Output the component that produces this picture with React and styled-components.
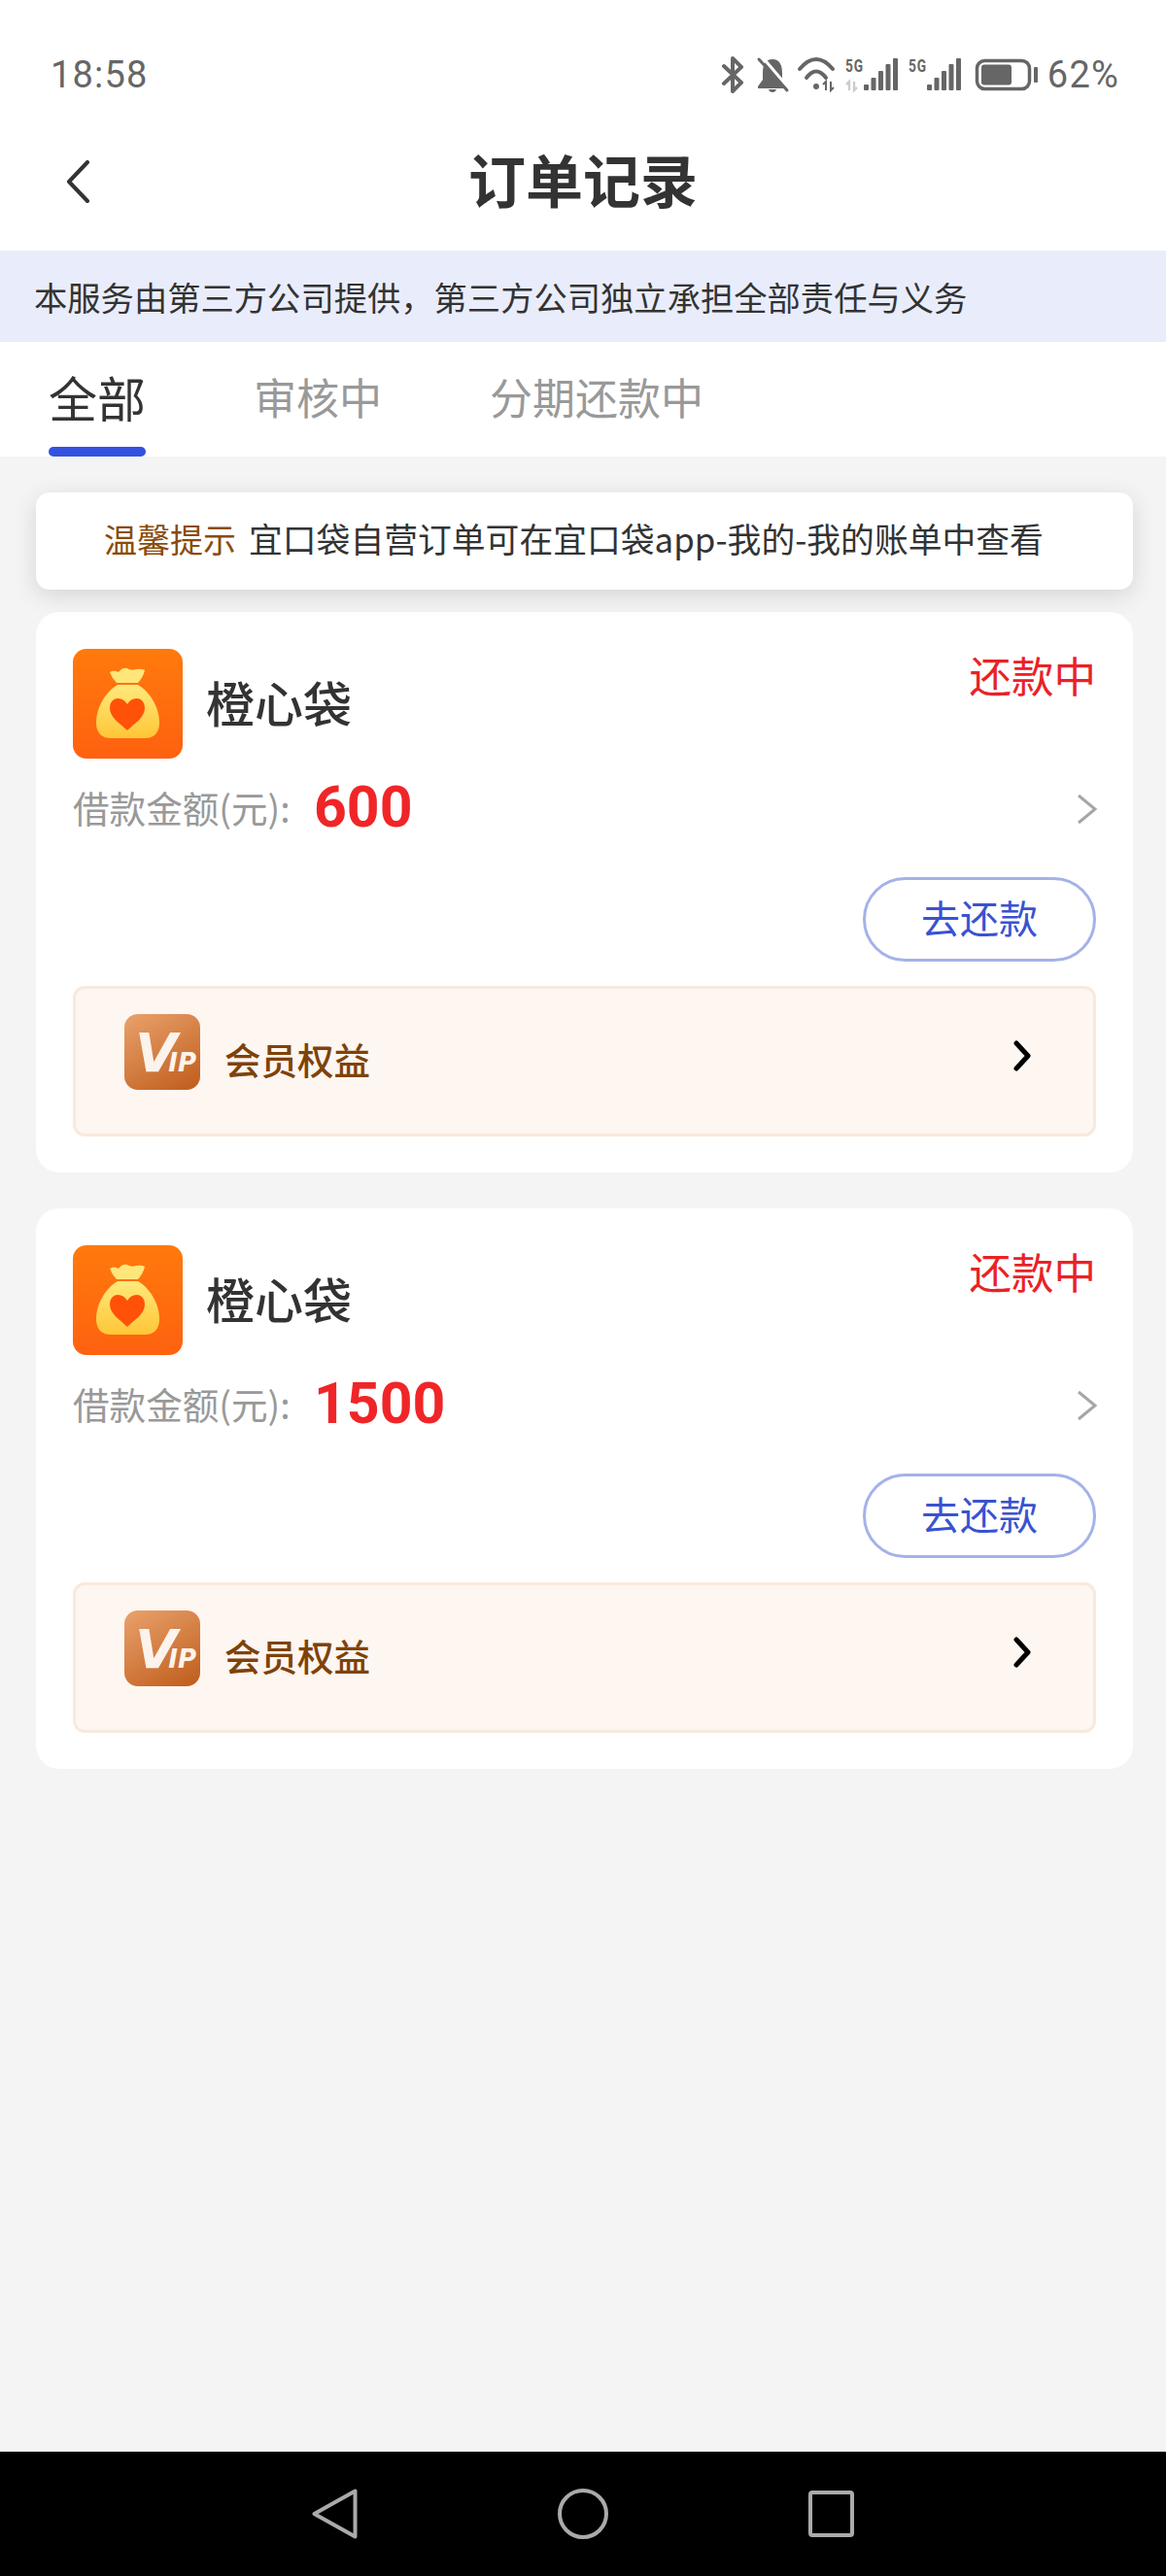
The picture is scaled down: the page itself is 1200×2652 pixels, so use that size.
import React from 'react';
import styled, { createGlobalStyle } from 'styled-components';

const GlobalStyle = createGlobalStyle`
  html, body {
    margin: 0;
    padding: 0;
    background: #f4f4f4;
  }
  * {
    box-sizing: border-box;
  }
  body {
    font-family: "Noto Sans CJK SC", "Noto Sans", sans-serif;
  }
`;

const Page = styled.div`
  display: flex;
  flex-direction: column;
  width: 1200px;
  height: 2652px;
  overflow: hidden;
`;

const StatusBar = styled.div`
  display: flex;
  align-items: center;
  justify-content: space-between;
  height: 124px;
  padding: 30px 48px 0 52px;
  background: #fff;
  color: #666;
  font-family: Roboto, sans-serif;
  font-size: 38px;
  letter-spacing: 1.2px;
`;

const StatusIcons = styled.div`
  display: flex;
  align-items: center;
  gap: 10px;

  svg {
    overflow: visible;
    flex-shrink: 0;
  }
`;

const NavBar = styled.div`
  display: grid;
  grid-template-columns: 1fr auto 1fr;
  align-items: center;
  height: 134px;
  padding: 0 68px 8px;
  background: #fff;
`;

const Title = styled.h1`
  margin: 0 0 6px;
  font-size: 59px;
  font-weight: 700;
  line-height: 70px;
  color: #333;
`;

const Banner = styled.div`
  display: flex;
  align-items: center;
  height: 94px;
  padding-left: 35px;
  background: #e9edfb;
  color: #333;
  font-size: 34.3px;
`;

const Tabs = styled.div`
  display: flex;
  align-items: flex-end;
  gap: 111px;
  height: 118px;
  padding-left: 50px;
  background: #fff;
`;

const Tab = styled.div`
  display: flex;
  flex-direction: column;
  align-items: center;
  font-size: ${(p) => (p.$active ? '50px' : '44px')};
  line-height: 60px;
  color: ${(p) => (p.$active ? '#333' : '#999')};

  &::after {
    content: '';
    width: 100px;
    height: 10px;
    margin-top: 22px;
    border-radius: 5px;
    background: ${(p) => (p.$active ? '#3352e0' : 'transparent')};
  }
`;

const Main = styled.main`
  flex: 1;
  display: flex;
  flex-direction: column;
  padding: 37px 34px 0 37px;
  background: #f4f4f4;
`;

const Notice = styled.div`
  display: flex;
  align-items: center;
  gap: 13px;
  height: 100px;
  padding: 0 0 6px 70px;
  border-radius: 14px;
  background: #fff;
  box-shadow: 0 6px 24px rgba(0, 0, 0, 0.13);
  color: #333;
  font-size: 34.8px;
  position: relative;
`;

const NoticeTag = styled.span`
  font-size: 34px;
  color: #8a4b0c;
`;

const Card = styled.section`
  height: 577px;
  margin-top: ${(p) => (p.$first ? '23px' : '37px')};
  padding: 38px;
  border-radius: 24px;
  background: #fff;
`;

const CardHead = styled.div`
  display: flex;
  justify-content: space-between;
  align-items: flex-start;
  height: 113px;
`;

const Brand = styled.div`
  display: flex;
  align-items: center;
  gap: 24px;
`;

const BrandIcon = styled.div`
  width: 113px;
  height: 113px;
  border-radius: 14px;
  background: linear-gradient(180deg, #ff7a0c, #ff6110);

  svg {
    display: block;
  }
`;

const BrandName = styled.span`
  margin-bottom: 6px;
  font-size: 50px;
  font-weight: 500;
  color: #333;
`;

const Status = styled.span`
  font-size: 43.5px;
  line-height: 54px;
  color: #e92226;
`;

const AmountRow = styled.div`
  display: flex;
  align-items: center;
  justify-content: space-between;
  height: 60px;
  margin-top: 19px;
`;

const Amount = styled.div`
  display: flex;
  align-items: center;
`;

const AmountLabel = styled.span`
  width: 248px;
  font-size: 37.6px;
  color: #999;
`;

const AmountValue = styled.span`
  font-family: Roboto, sans-serif;
  font-size: 59px;
  font-weight: 700;
  color: #f02528;
`;

const ChevronWrap = styled.div`
  margin: 6px -2px 0 0;

  svg {
    display: block;
  }
`;

const ActionRow = styled.div`
  display: flex;
  justify-content: flex-end;
  margin-top: 43px;
`;

const PayButton = styled.button`
  width: 240px;
  height: 87px;
  padding: 0 0 5px;
  border: 3px solid #a4b2e8;
  border-radius: 44px;
  background: #fff;
  color: #3a52d0;
  font-family: inherit;
  font-size: 40px;
`;

const VipBox = styled.div`
  display: flex;
  align-items: center;
  height: 155px;
  margin-top: 25px;
  padding: 0 64px 0 50px;
  border: 3px solid #f9e9dd;
  border-radius: 12px;
  background: #fdf6f1;
`;

const VipIcon = styled.div`
  width: 78px;
  height: 78px;
  margin-bottom: 20px;
  border-radius: 14px;
  background: linear-gradient(150deg, #e9a26c, #bf5c1b);

  svg {
    display: block;
  }
`;

const VipText = styled.span`
  flex: 1;
  margin: 0 0 7px 25px;
  font-size: 37.5px;
  font-weight: 500;
  color: #7f4208;
`;

const VipArrow = styled.svg`
  margin-bottom: 12px;
`;

const BottomBar = styled.div`
  display: flex;
  align-items: center;
  justify-content: center;
  gap: 206px;
  height: 128px;
  background: #000;

  svg {
    display: block;
  }
`;

const Bluetooth = () => (
  <svg width="27" height="40" viewBox="0 0 27 40" fill="none" stroke="#666" strokeWidth="4" strokeLinejoin="round" strokeLinecap="round">
    <path d="M3 11 L21 28 L12 37 V3 L21 12 L3 29" />
  </svg>
);

const BellOff = () => (
  <svg width="32" height="40" viewBox="0 0 32 40">
    <path fill="#666" d="M16 4 C8 4 6 11 6 18 V25 L1 32 V34 H31 V32 L26 25 V18 C26 11 24 4 16 4 Z" />
    <path fill="#666" d="M12 35 H20 Q19 38 16 38 Q13 38 12 35 Z" />
    <path stroke="#fff" strokeWidth="3" d="M5 1 L33 34" />
    <path stroke="#666" strokeWidth="3" strokeLinecap="round" d="M2 4 L31 36" />
  </svg>
);

const Wifi = () => (
  <svg width="38" height="40" viewBox="0 0 38 40" fill="none" stroke="#666" strokeWidth="4" strokeLinecap="round">
    <path d="M2 14 Q19 -6 36 14" />
    <path d="M9 23 Q19 10 29 23" />
    <circle cx="19" cy="32" r="3" fill="#666" stroke="none" />
    <path strokeWidth="2" strokeLinecap="butt" d="M29 36 V27 L26 30 M34 27 V36 L37 33" />
  </svg>
);

const Signal = ({ data }) => (
  <svg width="55" height="40" viewBox="0 0 55 40" fontFamily="Roboto, sans-serif">
    <text x="1" y="17" fontSize="18" fontWeight="700" fill="#666" textLength="19" lengthAdjust="spacingAndGlyphs">5G</text>
    {data && <path fill="none" stroke="#ccc" strokeWidth="2.4" d="M5 36 V27 L2 30 M10 27 V36 L13 33" />}
    {[[20, 30], [27.5, 23], [35, 16], [42.5, 9], [50, 3]].map(([x, y]) => (
      <rect key={x} x={x} y={y} width="5" height={36 - y} rx="1" fill="#666" />
    ))}
  </svg>
);

const Battery = () => (
  <svg width="69" height="40" viewBox="0 0 69 40">
    <rect x="6.5" y="5.5" width="54" height="29" rx="8" fill="none" stroke="#666" strokeWidth="3.5" />
    <rect x="11" y="9.5" width="31" height="21" rx="3" fill="#666" />
    <rect x="65" y="12" width="4" height="16" rx="1" fill="#666" />
  </svg>
);

const BackIcon = () => (
  <svg width="24" height="44" viewBox="0 0 24 44" fill="none" stroke="#333" strokeWidth="4" strokeLinecap="round" strokeLinejoin="round">
    <path d="M22 2 L3 22 L22 42" />
  </svg>
);

const BagIcon = () => (
  <svg width="113" height="113" viewBox="0 0 113 113">
    <defs>
      <linearGradient id="bagFill" x1="0" y1="0" x2="0" y2="1">
        <stop offset="0" stopColor="#ffe97c" />
        <stop offset="1" stopColor="#ffc636" />
      </linearGradient>
    </defs>
    <path fill="#ffe67a" d="M38 24 Q42 21 47 24 Q51 19 56 20 Q60 23 65 21 Q71 20 74 22 Q72 30 67 35 L45 35 Q40 30 38 24 Z" />
    <path fill="url(#bagFill)" d="M46 37 L67 37 C79 44 89 60 89 76 C89 88 82 92 74 92 L39 92 C31 92 24 88 24 76 C24 60 34 44 46 37 Z" />
    <path fill="#ff5208" d="M56 57 C51 48 38 49 38 61 C38 71 49 77 56 84 C63 77 74 71 74 61 C74 49 61 48 56 57 Z" />
  </svg>
);

const VipLogo = () => (
  <svg width="78" height="78" viewBox="0 0 78 78" fontFamily="DejaVu Sans, sans-serif" fontWeight="700" fontStyle="italic" fill="#fbf3ec">
    <text x="11" y="59">
      <tspan fontSize="56">V</tspan>
      <tspan fontSize="26" dx="-9">IP</tspan>
    </text>
  </svg>
);

const GrayChevron = () => (
  <svg width="22" height="32" viewBox="0 0 22 32" fill="none" stroke="#a6a6a6" strokeWidth="3">
    <path d="M2 2 L19 16 L2 30" />
  </svg>
);

const orders = [{ id: 1, amount: '600' }, { id: 2, amount: '1500' }];

const OrderCard = ({ amount, first }) => (
  <Card $first={first}>
    <CardHead>
      <Brand>
        <BrandIcon><BagIcon /></BrandIcon>
        <BrandName>橙心袋</BrandName>
      </Brand>
      <Status>还款中</Status>
    </CardHead>
    <AmountRow>
      <Amount>
        <AmountLabel>借款金额(元):</AmountLabel>
        <AmountValue>{amount}</AmountValue>
      </Amount>
      <ChevronWrap><GrayChevron /></ChevronWrap>
    </AmountRow>
    <ActionRow>
      <PayButton>去还款</PayButton>
    </ActionRow>
    <VipBox>
      <VipIcon><VipLogo /></VipIcon>
      <VipText>会员权益</VipText>
      <VipArrow width="18" height="32" viewBox="0 0 18 32" fill="none" stroke="#000" strokeWidth="5" strokeLinecap="round" strokeLinejoin="round">
        <path d="M3 3 L15 16 L3 29" />
      </VipArrow>
    </VipBox>
  </Card>
);

const App = () => {
  return (
    <Page>
      <GlobalStyle />
      <StatusBar>
        <span>18:58</span>
        <StatusIcons>
          <Bluetooth />
          <BellOff />
          <Wifi />
          <Signal data />
          <Signal />
          <Battery />
          <span>62%</span>
        </StatusIcons>
      </StatusBar>
      <NavBar>
        <BackIcon />
        <Title>订单记录</Title>
      </NavBar>
      <Banner>本服务由第三方公司提供，第三方公司独立承担全部责任与义务</Banner>
      <Tabs>
        <Tab $active>全部</Tab>
        <Tab>审核中</Tab>
        <Tab>分期还款中</Tab>
      </Tabs>
      <Main>
        <Notice>
          <NoticeTag>温馨提示</NoticeTag>
          <span>宜口袋自营订单可在宜口袋app-我的-我的账单中查看</span>
        </Notice>
        {orders.map((o, i) => (
          <OrderCard key={o.id} amount={o.amount} first={i === 0} />
        ))}
      </Main>
      <BottomBar>
        <svg width="47" height="52" viewBox="0 0 47 52" fill="none" stroke="#aaa" strokeWidth="4" strokeLinejoin="round">
          <path d="M2.5 26 L44.5 2.5 V49.5 Z" />
        </svg>
        <svg width="52" height="52" viewBox="0 0 52 52" fill="none" stroke="#aaa" strokeWidth="4">
          <circle cx="26" cy="26" r="24" />
        </svg>
        <svg width="47" height="48" viewBox="0 0 47 48" fill="none" stroke="#aaa" strokeWidth="4" strokeLinejoin="round">
          <rect x="2" y="2" width="43" height="44" rx="2" />
        </svg>
      </BottomBar>
    </Page>
  );
};

export default App;
